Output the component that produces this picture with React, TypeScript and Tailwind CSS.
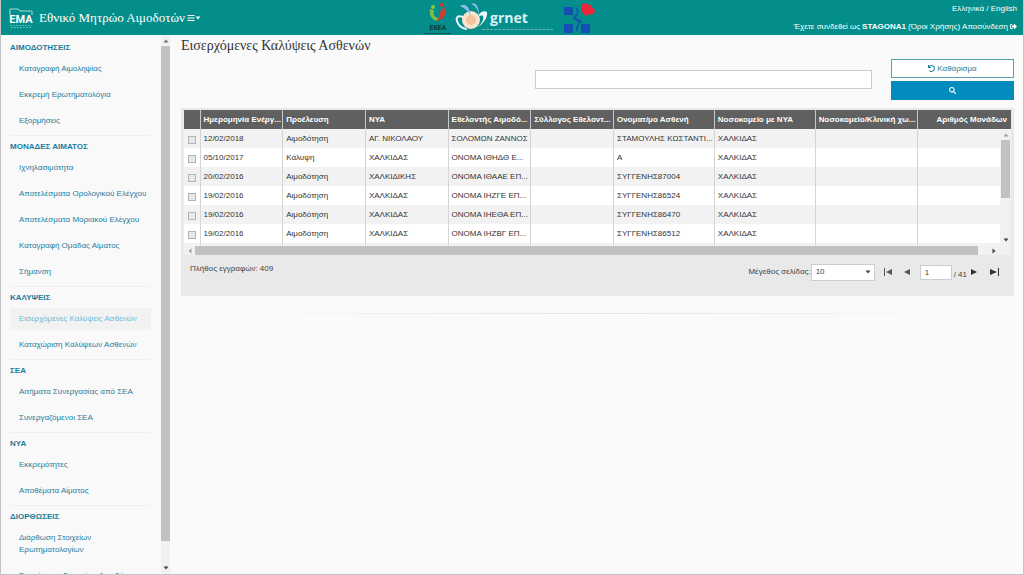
import { FaUndo, FaSearch, FaSignOutAlt, FaBars } from 'react-icons/fa';

const sections = [
  { title: 'ΑΙΜΟΔΟΤΗΣΕΙΣ', items: ['Καταγραφή Αιμοληψίας', 'Εκκρεμή Ερωτηματολόγια', 'Εξορμήσεις'] },
  {
    title: 'ΜΟΝΑΔΕΣ ΑΙΜΑΤΟΣ',
    items: [
      'Ιχνηλασιμότητα',
      'Αποτελέσματα Ορολογικού Ελέγχου',
      'Αποτελέσματα Μοριακού Ελέγχου',
      'Καταγραφή Ομάδας Αίματος',
      'Σήμανση',
    ],
  },
  { title: 'ΚΑΛΥΨΕΙΣ', items: ['Εισερχόμενες Καλύψεις Ασθενών', 'Καταχώριση Καλύψεων Ασθενών'] },
  { title: 'ΣΕΑ', items: ['Αιτήματα Συνεργασίας από ΣΕΑ', 'Συνεργαζόμενοι ΣΕΑ'] },
  { title: 'ΝΥΑ', items: ['Εκκρεμότητες', 'Αποθέματα Αίματος'] },
  { title: 'ΔΙΟΡΘΩΣΕΙΣ', items: ['Διάρθωση Στοιχείων Ερωτηματολογίων', 'Ενημέρωση Στοιχείων Αιμοδότη'] },
];

const activeItem = 'Εισερχόμενες Καλύψεις Ασθενών';

const columns = [
  { label: 'Ημερομηνία Ενέργ...', width: 'w-[10%]' },
  { label: 'Προέλευση', width: 'w-[10%]' },
  { label: 'ΝΥΑ', width: 'w-[10%]' },
  { label: 'Εθελοντής Αιμοδό...', width: 'w-[10%]' },
  { label: 'Σύλλογος Εθελοντ...', width: 'w-[10%]' },
  { label: 'Ονοματ/μο Ασθενή', width: 'w-[12.2%]' },
  { label: 'Νοσοκομείο με ΝΥΑ', width: 'w-[12.2%]' },
  { label: 'Νοσοκομείο/Κλινική χω...', width: 'w-[12.4%]' },
];

const rows = [
  ['12/02/2018', 'Αιμοδότηση', 'ΑΓ. ΝΙΚΟΛΑΟΥ', 'ΣΟΛΟΜΩΝ ΖΑΝΝΟΣ', '', 'ΣΤΑΜΟΥΛΗΣ ΚΩΣΤΑΝΤΙ...', 'ΧΑΛΚΙΔΑΣ', '', ''],
  ['05/10/2017', 'Κάλυψη', 'ΧΑΛΚΙΔΑΣ', 'ΟΝΟΜΑ ΙΘΗΔΘ Ε...', '', 'Α', 'ΧΑΛΚΙΔΑΣ', '', ''],
  ['20/02/2016', 'Αιμοδότηση', 'ΧΑΛΚΙΔΙΚΗΣ', 'ΟΝΟΜΑ ΙΘΑΑΕ ΕΠ...', '', 'ΣΥΓΓΕΝΗΣ87004', 'ΧΑΛΚΙΔΑΣ', '', ''],
  ['19/02/2016', 'Αιμοδότηση', 'ΧΑΛΚΙΔΑΣ', 'ΟΝΟΜΑ ΙΗΖΓΕ ΕΠ...', '', 'ΣΥΓΓΕΝΗΣ86524', 'ΧΑΛΚΙΔΑΣ', '', ''],
  ['19/02/2016', 'Αιμοδότηση', 'ΧΑΛΚΙΔΑΣ', 'ΟΝΟΜΑ ΙΗΕΘΑ ΕΠ...', '', 'ΣΥΓΓΕΝΗΣ86470', 'ΧΑΛΚΙΔΑΣ', '', ''],
  ['19/02/2016', 'Αιμοδότηση', 'ΧΑΛΚΙΔΑΣ', 'ΟΝΟΜΑ ΙΗΖΒΓ ΕΠ...', '', 'ΣΥΓΓΕΝΗΣ86512', 'ΧΑΛΚΙΔΑΣ', '', ''],
];

function Arrow({ points, className = 'fill-neutral-700' }: { points: string; className?: string }) {
  return (
    <svg viewBox="0 0 6 6" className={`h-1.5 w-1.5 shrink-0 ${className}`} aria-hidden="true">
      <polygon points={points} />
    </svg>
  );
}

const UP = '0.5,4.5 5.5,4.5 3,1.5';
const DOWN = '0.5,1.5 5.5,1.5 3,4.5';
const LEFT = '4.5,0.5 4.5,5.5 1.5,3';
const RIGHT = '1.5,0.5 1.5,5.5 4.5,3';

function EmaLogo() {
  return (
    <svg viewBox="0 0 24 23" className="h-[23px] w-6" aria-hidden="true">
      <path d="M1 9V3h8l2 2h12v4" fill="none" stroke="#a5dbd9" strokeWidth="1" />
      <text x="12" y="17" textAnchor="middle" fontSize="11" fontWeight="700" fill="#fff" fontFamily="Roboto">
        EMA
      </text>
      <path d="M1 19.5h22M2 21.5h20" stroke="#5cb9b6" strokeWidth="1" strokeDasharray="2 1" />
    </svg>
  );
}

function EkeaLogo() {
  return (
    <svg viewBox="0 0 28 34" className="h-[34px] w-7" aria-hidden="true">
      <circle cx="9" cy="6" r="2" fill="#8cc63f" />
      <circle cx="18" cy="4" r="2" fill="#d8392f" />
      <path d="M6 8c-1 6 1 10 7 12l1-3c-4-1-5-4-4-8z" fill="#7bbf45" />
      <path d="M20 6c3 6 1 12-7 14 0-3 4-4 3-9z" fill="#d8392f" />
      <text x="14" y="29" textAnchor="middle" fontSize="7" fontWeight="700" fill="#0e3c3b" fontFamily="Roboto">
        ΕΚΕΑ
      </text>
      <path d="M0 32.5h27" stroke="#0e5453" strokeWidth="1" />
    </svg>
  );
}

function GrnetLogo() {
  return (
    <svg viewBox="0 0 104 32" className="h-8 w-[104px]" aria-hidden="true">
      <path d="M8 15c-6-2-7 1-6 4 1 4 5 7 9 8" fill="none" stroke="#e8f5fb" strokeWidth="2" strokeLinecap="round" />
      <circle cx="16" cy="18" r="9" fill="#f8e3cd" />
      <circle cx="16" cy="18" r="5" fill="#f6c49b" />
      <path d="M5 4c6-4 10 3 11 10-3-5-6-8-11-10z" fill="#8fb9ec" />
      <path d="M16 2c5-3 8 3 8 11-1-5-3-9-8-11z" fill="#8fb9ec" />
      <path d="M23 16c0-5 6-8 9-6 1 5-3 11-9 15 4-4 6-8 5-11-2-1-4 0-5 2z" fill="#e8f5fb" />
      <text x="35" y="21" fontSize="14" fontWeight="700" fill="#d9f3f5" fontFamily="Open Sans">
        grnet
      </text>
      <path d="M27 27.5h72" stroke="#5cb9b6" strokeWidth="1" strokeDasharray="3 1" />
    </svg>
  );
}

function HospitalLogo() {
  return (
    <svg viewBox="0 0 34 32" className="h-8 w-[34px]" aria-hidden="true">
      <path d="M2 5h9v8H2zM2 22h9v9H2zM19 22h9v9h-9z" fill="#1450b4" />
      <path
        d="M16 5c-3 3 2 4-1 7s-3 5 1 7-3 5-1 10M11 16h4M16 17l4 4"
        fill="none"
        stroke="#1450b4"
        strokeWidth="1.5"
      />
      <path d="M19 5c0-4 5-5 7-2 3-1 4 1 4 3 3 0 4 4 1 6-3 1-6 0-7 2-3-2-5-5-5-9z" fill="#ee2638" />
    </svg>
  );
}

function Header() {
  return (
    <header className="flex h-[35px] shrink-0 items-center bg-[#038e8b] pl-2 pr-1.5 text-white">
      <div className="flex flex-1 items-center">
        <EmaLogo />
        <a href="#" className="ml-1.5 whitespace-nowrap font-['Liberation_Serif',serif] text-[13px]">
          Εθνικό Μητρώο Αιμοδοτών
        </a>
        <button type="button" aria-label="Μενού" className="ml-0.5 flex items-center">
          <FaBars className="h-2 w-2" />
          <Arrow points={DOWN} className="fill-white" />
        </button>
      </div>
      <div className="flex items-center gap-[3px] pr-1.5">
        <EkeaLogo />
        <GrnetLogo />
        <HospitalLogo />
      </div>
      <div className="flex flex-1 flex-col items-end gap-1.5 whitespace-nowrap leading-3">
        <div>
          <a href="#">Ελληνικά</a> / <a href="#">English</a>
        </div>
        <div className="flex items-center gap-0.5">
          <span>Έχετε συνδεθεί ως</span>
          <b>STAGONA1</b>
          <a href="#">(Όροι Χρήσης)</a>
          <a href="#" className="flex items-center gap-0.5">
            Αποσύνδεση <FaSignOutAlt className="h-[7px] w-[7px]" />
          </a>
        </div>
      </div>
    </header>
  );
}

function Sidebar() {
  return (
    <div className="flex min-h-0 shrink-0">
      <nav className="w-[160px] overflow-hidden bg-[#f9f9f9] pl-[9px] pr-2.5 pt-[7px] text-[#1c7c9c]">
        {sections.map((section) => (
          <section key={section.title} className="mb-[5px] border-b border-[#f0f0f0] pb-[3px]">
            <h2 className="mb-1 font-bold leading-3">{section.title}</h2>
            <ul className="flex flex-col gap-1">
              {section.items.map((item) => (
                <li key={item}>
                  <a
                    href="#"
                    className={`block py-[5px] pl-[9px] leading-3 ${
                      item === activeItem ? 'bg-[#f2f2f2] text-[#6cb8d6]' : ''
                    }`}
                  >
                    {item}
                  </a>
                </li>
              ))}
            </ul>
          </section>
        ))}
      </nav>
      <div className="flex w-[9px] flex-col items-center justify-between bg-[#f1f1f1] py-[3px]">
        <Arrow points={UP} className="fill-neutral-500" />
        <div className="mb-6 mt-0.5 w-full flex-1 bg-[#c1c1c1]" />
        <Arrow points={DOWN} />
      </div>
    </div>
  );
}

function CoverageTable() {
  return (
    <table className="w-full table-fixed border-collapse text-left text-[#333]">
      <thead>
        <tr className="h-[19px] bg-[#606060] text-white">
          <th className="w-4" />
          {columns.map((column) => (
            <th
              key={column.label}
              className={`whitespace-nowrap border-l border-[#c8c8c8] pl-[3px] font-bold ${column.width}`}
            >
              {column.label}
            </th>
          ))}
          <th className="whitespace-nowrap border-l border-[#c8c8c8] pr-1 text-right font-bold">Αριθμός Μονάδων</th>
        </tr>
      </thead>
      <tbody>
        {rows.map((row, i) => (
          <tr key={i} className="h-[19px] odd:bg-[#f2f2f2] even:bg-white">
            <td className="pt-0.5">
              <input
                type="checkbox"
                aria-label={`Επιλογή ${row[0]}`}
                className="mx-auto block h-2 w-2 appearance-none border border-[#b4b4b4] bg-[#e8e8e8]"
              />
            </td>
            {row.map((cell, j) => (
              <td key={j} className="whitespace-nowrap border-l border-[#d5d5d5] pl-[3px]">
                {cell}
              </td>
            ))}
          </tr>
        ))}
        {/* top edge of the next row, the rest is scrolled out of view */}
        <tr className="h-[3px] bg-[#f2f2f2]">
          <td />
          {rows[0].map((_, j) => (
            <td key={j} className="border-l border-[#d5d5d5]" />
          ))}
        </tr>
      </tbody>
    </table>
  );
}

function Pager() {
  return (
    <div className="flex items-start justify-between pb-[15px] pl-1.5 pr-3 pt-2 text-[#444]">
      <span className="leading-3">Πλήθος εγγραφών: 409</span>
      <div className="flex items-center">
        <label htmlFor="page-size">Μέγεθος σελίδας:</label>
        <div className="relative">
          <select
            id="page-size"
            defaultValue="10"
            className="block h-[17px] w-16 appearance-none border border-[#ccc] bg-white pl-1"
          >
            <option>10</option>
            <option>20</option>
          </select>
          <div className="pointer-events-none absolute right-1 top-[5px]">
            <Arrow points={DOWN} />
          </div>
        </div>
        <button type="button" aria-label="Πρώτη" className="ml-[9px]">
          <svg viewBox="0 0 9 8" className="h-2 w-[9px] fill-[#555]">
            <path d="M0 0h1v8H0zM8 1v6L2 4z" />
          </svg>
        </button>
        <button type="button" aria-label="Προηγούμενη" className="ml-[11px]">
          <svg viewBox="0 0 7 8" className="h-2 w-[7px] fill-[#555]">
            <path d="M6 1v6L0 4z" />
          </svg>
        </button>
        <input
          type="text"
          aria-label="Σελίδα"
          defaultValue="1"
          className="ml-[9px] h-[15px] w-8 border border-[#ccc] bg-white pl-1"
        />
        <span className="ml-0.5 pt-1.5">/ 41</span>
        <button type="button" aria-label="Επόμενη" className="ml-1">
          <svg viewBox="0 0 7 8" className="h-2 w-[7px] fill-[#333]">
            <path d="M0 1v6l6-3z" />
          </svg>
        </button>
        <button type="button" aria-label="Τελευταία" className="ml-3">
          <svg viewBox="0 0 9 8" className="h-2 w-[9px] fill-[#333]">
            <path d="M8 0h1v8H8zM0 1v6l7-3z" />
          </svg>
        </button>
      </div>
    </div>
  );
}

export default function App() {
  return (
    <div className="flex h-screen flex-col overflow-hidden border border-t-0 border-[#c4c4c4] bg-[#fafafa] font-['Liberation_Sans',Arial,sans-serif] text-[8px]">
      <Header />
      <div className="flex min-h-0 flex-1">
        <Sidebar />
        <main className="min-w-0 flex-1 pl-[11px] pr-[9px]">
          <h1 className="pt-0.5 font-['Liberation_Serif',serif] text-[14px] leading-[18px] text-[#333]">
            Εισερχόμενες Καλύψεις Ασθενών
          </h1>
          <form className="mt-1 flex items-center justify-end gap-[19px]">
            <input
              type="text"
              aria-label="Αναζήτηση"
              className="h-[19px] w-[337px] border border-[#ccc] bg-white px-1"
            />
            <div className="flex w-[123px] flex-col gap-[3px]">
              <button
                type="reset"
                className="flex h-[19px] items-center justify-center gap-0.5 border border-[#5a9fb4] bg-white text-[#1c7c9c]"
              >
                <FaUndo className="h-[7px] w-[7px]" /> Καθάρισμα
              </button>
              <button
                type="submit"
                aria-label="Αναζήτηση"
                className="flex h-[19px] items-center justify-center bg-[#028bbd] text-white"
              >
                <FaSearch className="h-[7px] w-[7px]" />
              </button>
            </div>
          </form>
          <div className="mt-2 bg-[#e9e9e9] px-[3px] pt-0.5">
            <div className="relative">
              <CoverageTable />
              <div className="absolute bottom-0 right-0 top-[19px] flex w-[11px] flex-col items-center bg-[#f1f1f1] py-[3px]">
                <Arrow points={UP} className="fill-neutral-400" />
                <div className="mt-0.5 h-[58px] w-[9px] bg-[#c1c1c1]" />
                <div className="mt-auto">
                  <Arrow points={DOWN} />
                </div>
              </div>
            </div>
            <div className="flex h-[9px] items-center bg-[#f1f1f1] pl-[3px]">
              <Arrow points={LEFT} className="fill-neutral-400" />
              <div className="ml-0.5 h-full flex-1 bg-[#c1c1c1]" />
              <div className="ml-[13px] mr-3.5">
                <Arrow points={RIGHT} />
              </div>
            </div>
            <Pager />
          </div>
          <div className="mx-7 mt-[17px] h-px bg-linear-to-r from-transparent via-[#e4e4e4] to-transparent" />
        </main>
      </div>
    </div>
  );
}
